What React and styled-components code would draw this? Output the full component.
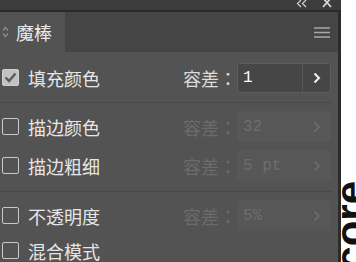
import React from 'react';
import styled, { createGlobalStyle } from 'styled-components';

const GlobalStyle = createGlobalStyle`
  html, body {
    margin: 0;
    padding: 0;
    background: #ffffff;
  }
  body {
    font-family: "Noto Sans CJK SC", "Noto Sans", sans-serif;
  }
`;

const Page = styled.div`
  display: flex;
  width: 356px;
  height: 262px;
  overflow: hidden;
`;

const Panel = styled.div`
  display: flex;
  flex-direction: column;
  width: 341px;
  flex-shrink: 0;
  background: #3c3c3c;
  overflow: hidden;
`;

const TitleBar = styled.div`
  display: flex;
  flex-shrink: 0;
  justify-content: flex-end;
  align-items: flex-start;
  gap: 15px;
  height: 10px;
  padding-right: 9px;
  border-bottom: 2px solid #2a2a2a;
  overflow: hidden;
`;

const Frame = styled.div`
  flex: 1;
  min-height: 0;
  display: flex;
  flex-direction: column;
  border-right: 3px solid #2b2b2b;
  overflow: hidden;
`;

const TabBar = styled.div`
  display: flex;
  flex-shrink: 0;
  align-items: stretch;
  height: 40px;
  background: #454545;
`;

const Tab = styled.div`
  display: flex;
  align-items: center;
  gap: 7px;
  width: 65px;
  padding-left: 2px;
  box-sizing: border-box;
  background: #535353;
  color: #e8e8e8;
  font-size: 18px;
`;

const MenuButton = styled.div`
  margin-left: auto;
  display: flex;
  align-items: center;
  padding-right: 8px;
`;

const Body = styled.div`
  flex: 1;
  min-height: 0;
  background: #535353;
`;

const Group = styled.div`
  display: flex;
  flex-direction: column;
  gap: ${p => p.gap}px;
  padding: ${p => p.top}px 0 ${p => p.bottom}px;
  border-bottom: ${p => (p.last ? 'none' : '1px solid #484848')};
  margin-right: 6px;
`;

const Row = styled.div`
  display: flex;
  flex-shrink: 0;
  align-items: center;
  height: 31px;
  padding-left: 2px;
  padding-right: 1px;
`;

const Box = styled.div`
  width: 17px;
  height: 17px;
  box-sizing: border-box;
  border: 1px solid ${p => (p.checked ? '#cfcfcf' : '#c8c8c8')};
  border-radius: 2px;
  background: ${p => (p.checked ? '#c2c2c2' : 'transparent')};
  display: flex;
  align-items: center;
  justify-content: center;
`;

const Label = styled.span`
  margin-left: 9px;
  color: #e6e6e6;
  font-size: 18px;
  line-height: 1;
`;

const Tolerance = styled.div`
  margin-left: auto;
  display: flex;
  align-items: center;
`;

const TolLabel = styled.span`
  color: ${p => (p.disabled ? '#6b6b6b' : '#dcdcdc')};
  font-family: "Noto Sans CJK JP", "Noto Sans CJK SC", sans-serif;
  font-size: 18px;
  line-height: 1;
  width: 54px;
`;

const Field = styled.div`
  display: flex;
  width: 94px;
  height: ${p => (p.disabled ? 31 : 30)}px;
  box-sizing: border-box;
  border: 1px solid ${p => (p.disabled ? '#575757' : '#5e5e5e')};
  border-radius: 3px;
  background: ${p => (p.disabled ? '#575757' : '#464646')};
`;

const Value = styled.div`
  flex: 1;
  display: flex;
  align-items: center;
  padding-left: 5px;
  color: ${p => (p.disabled ? '#6e6e6e' : '#ffffff')};
  font-family: "Liberation Mono", monospace;
  font-size: 16px;
`;

const Stepper = styled.div`
  width: 27px;
  display: flex;
  align-items: center;
  justify-content: center;
  border-left: 1px solid ${p => (p.disabled ? '#575757' : '#5a5a5a')};
`;

const Side = styled.div`
  flex: 1;
  overflow: hidden;
  padding-top: 181px;
`;

const Vertical = styled.div`
  writing-mode: vertical-rl;
  transform: rotate(180deg);
  color: #111111;
  font-family: "Liberation Sans", sans-serif;
  font-weight: bold;
  font-size: 42px;
  line-height: 1;
  margin-left: -11px;
`;

const Chevron = ({ color }) => (
  <svg width="8" height="12" viewBox="0 0 8 12">
    <path d="M1.5 1.5 L6 6 L1.5 10.5" fill="none" stroke={color} strokeWidth="2" />
  </svg>
);

const Check = () => (
  <svg width="13" height="11" viewBox="0 0 13 11">
    <path d="M1.5 5.5 L5 9 L11.5 1.5" fill="none" stroke="#5a5a5a" strokeWidth="2.4" />
  </svg>
);

const rows = [
  [
    { label: '填充颜色', checked: true, value: '1' },
  ],
  [
    { label: '描边颜色', value: '32', disabled: true },
    { label: '描边粗细', value: '5 pt', disabled: true },
  ],
  [
    { label: '不透明度', value: '5%', disabled: true },
    { label: '混合模式' },
  ],
];

const groupSpacing = [
  { top: 10, bottom: 9, gap: 8 },
  { top: 8, bottom: 10, gap: 8 },
  { top: 8, bottom: 0, gap: 4 },
];

const OptionRow = ({ label, checked, value, disabled }) => (
  <Row>
    <Box checked={checked}>{checked && <Check />}</Box>
    <Label>{label}</Label>
    {value !== undefined && (
      <Tolerance>
        <TolLabel disabled={disabled}>容差：</TolLabel>
        <Field disabled={disabled}>
          <Value disabled={disabled}>{value}</Value>
          <Stepper disabled={disabled}>
            <Chevron color={disabled ? '#6a6a6a' : '#f0f0f0'} />
          </Stepper>
        </Field>
      </Tolerance>
    )}
  </Row>
);

export default function App() {
  return (
    <>
      <GlobalStyle />
      <Page>
        <Panel>
          <TitleBar>
            <svg width="11" height="8" viewBox="0 0 11 8">
              <path d="M5 0 L1.5 3.5 L5 7 M10 0 L6.5 3.5 L10 7" fill="none" stroke="#cfcfcf" strokeWidth="1.3" />
            </svg>
            <svg width="10" height="9" viewBox="0 0 10 9">
              <path d="M1 -2 L9 7 M9 -2 L1 7" fill="none" stroke="#d6d6d6" strokeWidth="1.8" />
            </svg>
          </TitleBar>
          <Frame>
            <TabBar>
              <Tab>
                <svg width="7" height="12" viewBox="0 0 7 12">
                  <path d="M1 4.5 L3.5 1.5 L6 4.5 M1 7.5 L3.5 10.5 L6 7.5" fill="none" stroke="#8c8c8c" strokeWidth="1.4" />
                </svg>
                魔棒
              </Tab>
              <MenuButton>
                <svg width="16" height="11" viewBox="0 0 16 11">
                  <path d="M0 1 H16 M0 5.5 H16 M0 10 H16" stroke="#a8a8a8" strokeWidth="1.6" />
                </svg>
              </MenuButton>
            </TabBar>
            <Body>
              {rows.map((group, i) => (
                <Group key={i} {...groupSpacing[i]} last={i === rows.length - 1}>
                  {group.map(r => (
                    <OptionRow key={r.label} {...r} />
                  ))}
                </Group>
              ))}
            </Body>
          </Frame>
        </Panel>
        <Side>
          <Vertical>core</Vertical>
        </Side>
      </Page>
    </>
  );
}
